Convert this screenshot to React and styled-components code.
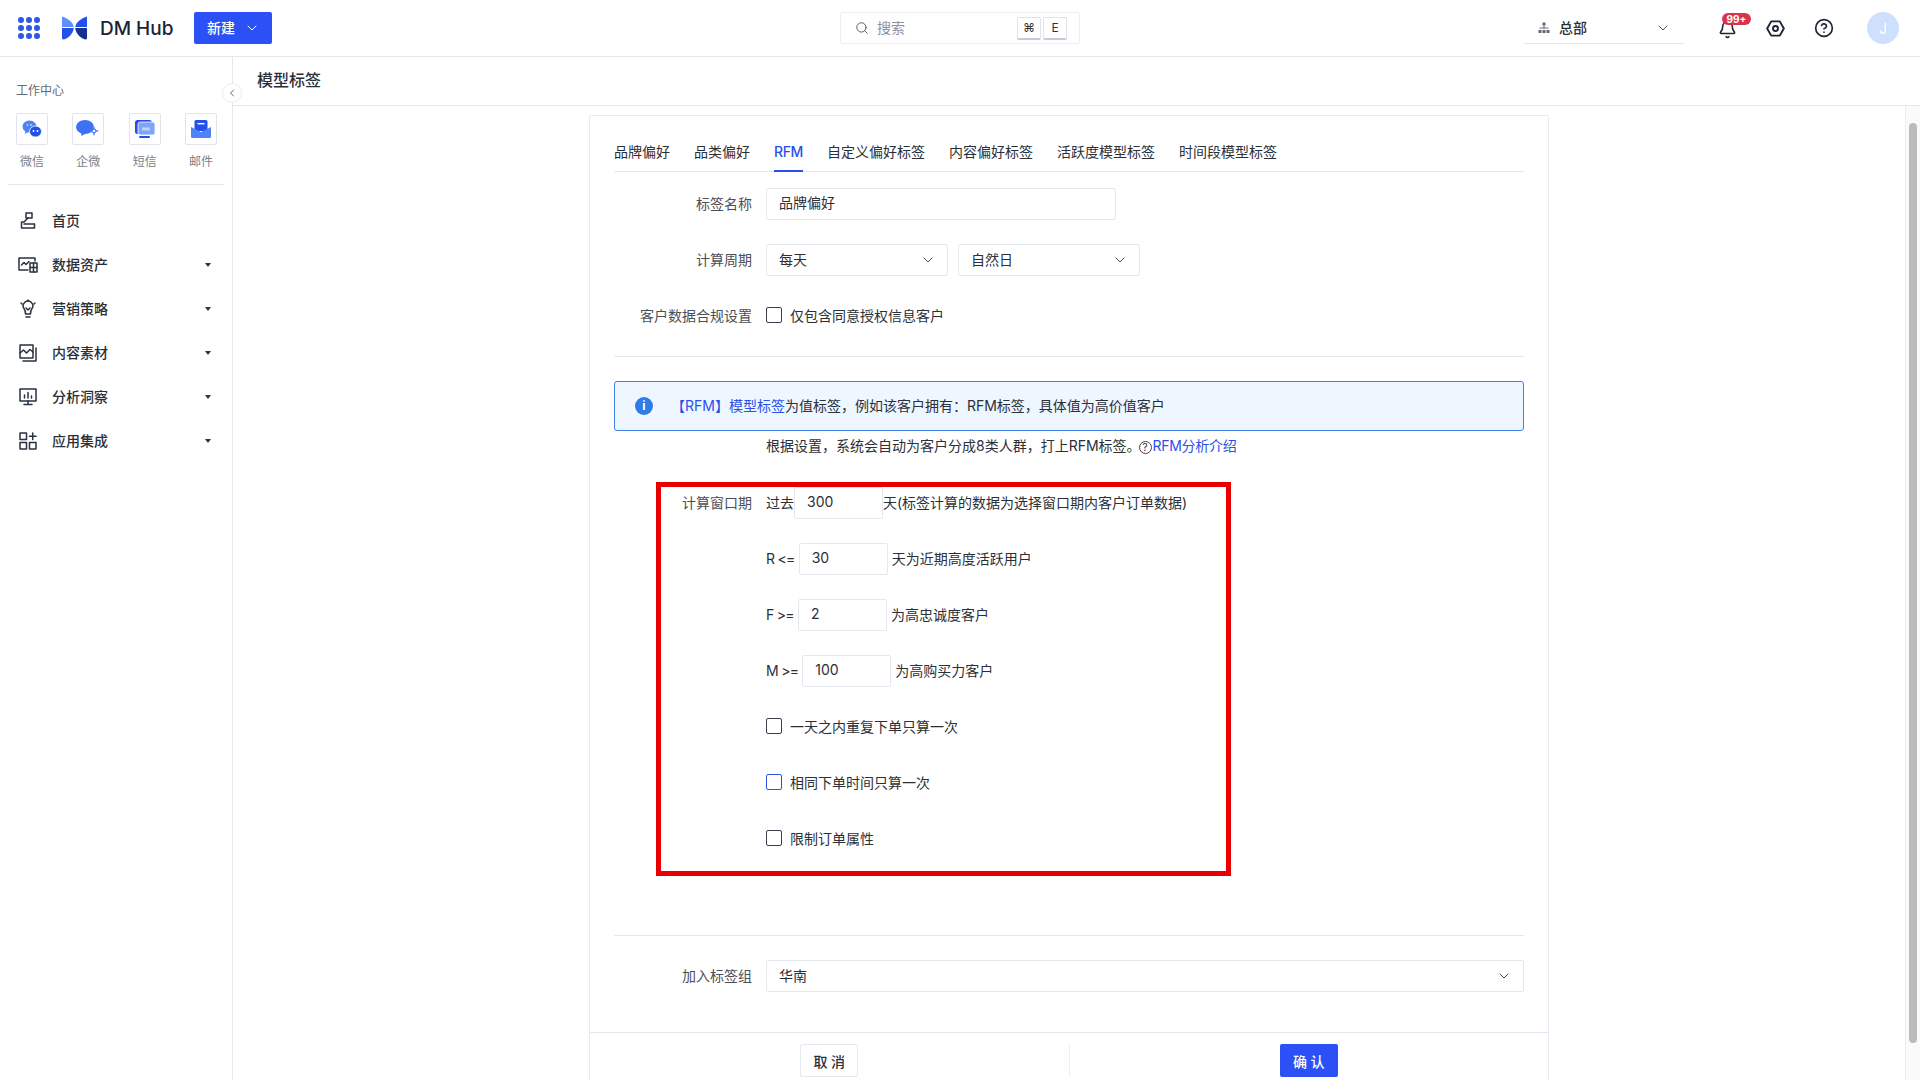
import styled, { createGlobalStyle } from "styled-components";
import { ChevronDown, ChevronLeft, Search, Bell, CircleHelp } from "lucide-react";

const App = () => {
  return (
    <Page>
      <GlobalStyle />
      <TopBar>
        <TopLeft>
          <AppGrid>
            {Array.from({ length: 9 }).map((_, i) => (
              <AppDot key={i} />
            ))}
          </AppGrid>
          <LogoMark />
          <Brand>DM Hub</Brand>
          <NewButton>
            <span>新建</span>
            <ChevronDown size={16} strokeWidth={1.5} />
          </NewButton>
        </TopLeft>
        <SearchBox>
          <Search size={14} strokeWidth={1.6} color="#555" />
          <SearchText>搜索</SearchText>
          <KeyCap>⌘</KeyCap>
          <KeyCap>E</KeyCap>
        </SearchBox>
        <TopRight>
          <OrgSelect>
            <OrgIcon />
            <OrgName>总部</OrgName>
            <ChevronDown size={16} strokeWidth={1.5} color="#555" />
          </OrgSelect>
          <BellWrap>
            <Bell size={19} strokeWidth={2} color="#1d2433" />
            <Badge>99+</Badge>
          </BellWrap>
          <SettingIcon />
          <HelpWrap>
            <CircleHelp size={20} strokeWidth={2} color="#1d2433" />
          </HelpWrap>
          <Avatar>J</Avatar>
        </TopRight>
      </TopBar>
      <Main>
        <Sidebar>
          <CollapseBtn>
            <ChevronLeft size={12} strokeWidth={2} color="#667" />
          </CollapseBtn>
          <SideTitle>工作中心</SideTitle>
          <ChannelRow>
            {channels.map((c) => (
              <Channel key={c.label}>
                <ChannelTile>{c.icon}</ChannelTile>
                <ChannelLabel>{c.label}</ChannelLabel>
              </Channel>
            ))}
          </ChannelRow>
          <SideDivider />
          <Menu>
            {menus.map((m) => (
              <MenuItem key={m.label}>
                <MenuIcon>{m.icon}</MenuIcon>
                <MenuLabel>{m.label}</MenuLabel>
                {m.caret && <Caret />}
              </MenuItem>
            ))}
          </Menu>
        </Sidebar>
        <Content>
          <TitleBar>模型标签</TitleBar>
          <Body>
            <Scroller>
              <Card>
                <Tabs>
                  {tabs.map((t) => (
                    <Tab key={t} $active={t === "RFM"}>
                      {t}
                    </Tab>
                  ))}
                </Tabs>
                <Form>
                  <Row>
                    <Label>标签名称</Label>
                    <Input $width={350}>品牌偏好</Input>
                  </Row>
                  <Row>
                    <Label>计算周期</Label>
                    <Select $width={182}>
                      每天
                      <ChevronDown size={16} strokeWidth={1.4} color="#444" />
                    </Select>
                    <Select $width={182}>
                      自然日
                      <ChevronDown size={16} strokeWidth={1.4} color="#444" />
                    </Select>
                  </Row>
                  <Row>
                    <Label>客户数据合规设置</Label>
                    <CheckLabel>
                      <CheckBox />
                      仅包含同意授权信息客户
                    </CheckLabel>
                  </Row>
                  <Divider />
                  <InfoBox>
                    <InfoIcon>i</InfoIcon>
                    <InfoText>
                      <Link>【RFM】模型标签</Link>为值标签，例如该客户拥有：RFM标签，具体值为高价值客户
                    </InfoText>
                  </InfoBox>
                  <Hint>
                    根据设置，系统会自动为客户分成8类人群，打上RFM标签。
                    <HintMark>?</HintMark>
                    <HintLink>RFM分析介绍</HintLink>
                  </Hint>
                  <Row>
                    <Label>计算窗口期</Label>
                    <Inline>过去</Inline>
                    <Input $width={89}>300</Input>
                    <Inline>天(标签计算的数据为选择窗口期内客户订单数据)</Inline>
                  </Row>
                  <Row>
                    <Label />
                    <Inline $tight>R &lt;=</Inline>
                    <Input $width={89} $gap={4}>30</Input>
                    <Inline $gap={4}>天为近期高度活跃用户</Inline>
                  </Row>
                  <Row>
                    <Label />
                    <Inline $tight>F &gt;=</Inline>
                    <Input $width={89} $gap={4}>2</Input>
                    <Inline $gap={4}>为高忠诚度客户</Inline>
                  </Row>
                  <Row>
                    <Label />
                    <Inline $tight>M &gt;=</Inline>
                    <Input $width={89} $gap={4}>100</Input>
                    <Inline $gap={4}>为高购买力客户</Inline>
                  </Row>
                  <Row>
                    <Label />
                    <CheckLabel>
                      <CheckBox />
                      一天之内重复下单只算一次
                    </CheckLabel>
                  </Row>
                  <Row>
                    <Label />
                    <CheckLabel>
                      <CheckBox $focus />
                      相同下单时间只算一次
                    </CheckLabel>
                  </Row>
                  <Row>
                    <Label />
                    <CheckLabel>
                      <CheckBox />
                      限制订单属性
                    </CheckLabel>
                  </Row>
                  <GroupDivider />
                  <GroupRow>
                    <Label>加入标签组</Label>
                    <Select $grow>
                      华南
                      <ChevronDown size={16} strokeWidth={1.4} color="#444" />
                    </Select>
                  </GroupRow>
                </Form>
                <Footer>
                  <FooterCell>
                    <CancelBtn>取 消</CancelBtn>
                  </FooterCell>
                  <FooterCell $line>
                    <ConfirmBtn>确 认</ConfirmBtn>
                  </FooterCell>
                </Footer>
                <RedFrame />
              </Card>
            </Scroller>
            <ScrollTrack>
              <ScrollThumb />
            </ScrollTrack>
          </Body>
        </Content>
      </Main>
    </Page>
  );
};

export default App;

const LogoMark = () => (
  <LogoSvg viewBox="0 0 25 24">
    <path d="M0 0.5 C6 2.5 11 6 11.8 11 L0 11 Z" fill="#5f8ff7" />
    <path d="M0 12 L11.8 12 C11 18 6 22.5 1.5 23.5 Q0 23.5 0 22 Z" fill="#2450ea" />
    <path d="M25 0.5 C19 2.5 14 6 13.2 11 L25 11 Z" fill="#2450ea" />
    <path d="M25 12 L13.2 12 C14 18 19 22.5 23.5 23.5 Q25 23.5 25 22 Z" fill="#14318f" />
  </LogoSvg>
);

const OrgIcon = () => (
  <svg width="12" height="12" viewBox="0 0 12 12" fill="#667">
    <rect x="4.5" y="0.5" width="3" height="3" />
    <rect x="5.5" y="3.5" width="1" height="3" />
    <rect x="1.5" y="5.5" width="9" height="1" />
    <rect x="0.5" y="8" width="3" height="3" />
    <rect x="4.5" y="8" width="3" height="3" />
    <rect x="8.5" y="8" width="3" height="3" />
  </svg>
);

const SettingIcon = () => (
  <SettingSvg viewBox="0 0 20 20" fill="none" stroke="#1d2433" strokeWidth="2">
    <path d="M5.5 2.5 H14.5 L18.8 10 L14.5 17.5 H5.5 L1.2 10 Z" strokeLinejoin="round" />
    <circle cx="10" cy="10" r="2.6" />
  </SettingSvg>
);

const channels = [
  {
    label: "微信",
    icon: (
      <svg width="20" height="20" viewBox="0 0 20 20">
        <ellipse cx="7.5" cy="7.5" rx="7" ry="6" fill="#4f82f5" />
        <path d="M3.5 11 L3 15 L7 12.5 Z" fill="#4f82f5" />
        <ellipse cx="13.5" cy="12.5" rx="6" ry="5.5" fill="#2450ea" stroke="#fff" strokeWidth="0.8" />
        <circle cx="11.5" cy="12" r="0.9" fill="#fff" />
        <circle cx="15.5" cy="12" r="0.9" fill="#fff" />
        <circle cx="5.5" cy="6" r="0.8" fill="#fff" />
        <circle cx="9" cy="6" r="0.8" fill="#fff" />
      </svg>
    ),
  },
  {
    label: "企微",
    icon: (
      <svg width="26" height="20" viewBox="0 0 26 20">
        <ellipse cx="10" cy="8" rx="9" ry="7" fill="#3f72f2" />
        <path d="M6 13 L6.5 17 L11 14.5 Z" fill="#3f72f2" />
        <path d="M19 9.5 L21.5 12 L19 14.5 L16.5 12 Z" fill="#fff" stroke="#3f72f2" strokeWidth="1.2" />
        <circle cx="19" cy="8.5" r="1" fill="#7da2f7" />
        <circle cx="22.5" cy="12" r="1" fill="#7da2f7" />
        <circle cx="19" cy="15.5" r="1" fill="#7da2f7" />
      </svg>
    ),
  },
  {
    label: "短信",
    icon: (
      <svg width="20" height="20" viewBox="0 0 20 20">
        <rect x="0" y="1" width="17" height="14" rx="2.5" fill="#2450ea" />
        <rect x="3" y="3" width="17" height="13" rx="2.5" fill="#7fa4f8" stroke="#fff" strokeWidth="0.8" />
        <rect x="7" y="8.5" width="8" height="3" fill="#fff" opacity="0.5" />
        <rect x="4" y="17" width="11" height="2" rx="1" fill="#2450ea" />
      </svg>
    ),
  },
  {
    label: "邮件",
    icon: (
      <svg width="20" height="18" viewBox="0 0 20 18">
        <rect x="3.5" y="0" width="13" height="11" rx="1.5" fill="#2450ea" />
        <rect x="6.5" y="3" width="7" height="1.4" fill="#fff" />
        <path d="M0 7 L10 12 L20 7 V16.5 Q20 18 18.5 18 H1.5 Q0 18 0 16.5 Z" fill="#4f82f5" />
      </svg>
    ),
  },
];

const lineProps = {
  fill: "none",
  stroke: "#2a3142",
  strokeWidth: 1.5,
  strokeLinejoin: "round",
  strokeLinecap: "round",
};

const menus = [
  {
    label: "首页",
    icon: (
      <svg width="16" height="18" viewBox="0 0 16 18" {...lineProps}>
        <rect x="6" y="1" width="6" height="5" />
        <path d="M8 6 L4 10 H1.5 V16 H14.5 V12 H4" />
      </svg>
    ),
  },
  {
    label: "数据资产",
    caret: true,
    icon: (
      <svg width="20" height="16" viewBox="0 0 20 16" {...lineProps}>
        <path d="M10 13 H1 V1 H17 V4" />
        <path d="M3.5 8 L6 5.5 L8 7.5 L11 4.5" />
        <rect x="12" y="6" width="7" height="9" />
        <path d="M12 10.5 H19 M15.5 6 V15" />
      </svg>
    ),
  },
  {
    label: "营销策略",
    caret: true,
    icon: (
      <svg width="18" height="20" viewBox="0 0 18 20" {...lineProps}>
        <path d="M5 8.5 a4.8 4.8 0 1 1 8 0 Q11.5 10.5 11.5 14 H6.5 Q6.5 10.5 5 8.5 Z" transform="translate(0 1)" />
        <path d="M7 18 H11" />
        <path d="M9 1 V2 M2 4 L3 5 M16 4 L15 5" />
        <path d="M7 9 L9 11 L11 9" />
      </svg>
    ),
  },
  {
    label: "内容素材",
    caret: true,
    icon: (
      <svg width="18" height="18" viewBox="0 0 18 18" {...lineProps}>
        <rect x="1" y="1" width="13" height="13" />
        <path d="M4 17 H17 V4" />
        <path d="M1 9 L4.5 6 L7.5 9 L11 5.5 L14 8" />
      </svg>
    ),
  },
  {
    label: "分析洞察",
    caret: true,
    icon: (
      <svg width="18" height="18" viewBox="0 0 18 18" {...lineProps}>
        <rect x="1" y="1" width="16" height="12" />
        <path d="M5.5 10 V7 M9 10 V4.5 M12.5 10 V8" />
        <path d="M9 13 V16 M5 16.5 H13" />
      </svg>
    ),
  },
  {
    label: "应用集成",
    caret: true,
    icon: (
      <svg width="18" height="18" viewBox="0 0 18 18" {...lineProps}>
        <rect x="1" y="1" width="6.5" height="6.5" />
        <rect x="1" y="10.5" width="6.5" height="6.5" />
        <rect x="10.5" y="10.5" width="6.5" height="6.5" />
        <path d="M13.7 1 V7.5 M10.5 4.2 H17" />
      </svg>
    ),
  },
];

const tabs = ["品牌偏好", "品类偏好", "RFM", "自定义偏好标签", "内容偏好标签", "活跃度模型标签", "时间段模型标签"];

const GlobalStyle = createGlobalStyle`
  html, body {
    margin: 0;
    padding: 0;
    background: #fff;
    overflow: hidden;
  }
  * {
    box-sizing: border-box;
  }
  body {
    font-family: Inter, "Noto Sans CJK SC", "Noto Sans", sans-serif;
    font-size: 14px;
    color: #2b2f38;
  }
`;

const Page = styled.div`
  width: 1920px;
  height: 1080px;
  display: flex;
  flex-direction: column;
  overflow: hidden;
  background: #fff;
`;

const TopBar = styled.header`
  height: 57px;
  flex: none;
  border-bottom: 1px solid #e6e8ef;
  display: grid;
  grid-template-columns: 840px 240px 1fr;
  align-items: center;
`;

const TopLeft = styled.div`
  display: flex;
  align-items: center;
  padding-left: 18px;
`;

const AppGrid = styled.div`
  display: grid;
  grid-template-columns: repeat(3, 6px);
  gap: 2px;
  width: 22px;
`;

const AppDot = styled.span`
  width: 6px;
  height: 6px;
  border-radius: 50%;
  background: #2d55e8;
`;

const LogoSvg = styled.svg`
  width: 25px;
  height: 24px;
  margin-left: 22px;
`;

const Brand = styled.span`
  margin-left: 13px;
  font-size: 19px;
  font-weight: 500;
  color: #1b2436;
  width: 94px;
`;

const NewButton = styled.button`
  width: 78px;
  height: 32px;
  border: none;
  border-radius: 2px;
  background: #2b50f5;
  color: #fff;
  font: inherit;
  font-weight: 500;
  display: flex;
  align-items: center;
  gap: 9px;
  padding: 0 0 0 13px;

  span {
    padding-bottom: 2px;
  }
`;

const SearchBox = styled.div`
  height: 32px;
  border: 1px solid #eceef3;
  border-radius: 2px;
  display: flex;
  align-items: center;
  padding: 0 12px 0 14px;
  gap: 2px;
`;

const SearchText = styled.span`
  color: #8a90a0;
  margin-left: 6px;
  padding-bottom: 2px;
  flex: 1;
`;

const KeyCap = styled.span`
  width: 24px;
  height: 23px;
  border: 1px solid #dfe2ea;
  border-bottom: 2px solid #c6cad6;
  border-radius: 2px;
  font-size: 12px;
  color: #333;
  display: flex;
  align-items: center;
  justify-content: center;
`;

const TopRight = styled.div`
  display: flex;
  align-items: center;
  height: 100%;
  padding-left: 444px;
`;

const OrgSelect = styled.div`
  width: 160px;
  height: 32px;
  flex: none;
  border-bottom: 1px solid #e6e8ef;
  display: flex;
  align-items: center;
  padding: 0 13px 0 14px;
`;

const OrgName = styled.span`
  flex: 1;
  margin-left: 9px;
  padding-bottom: 2px;
  font-weight: 500;
`;

const BellWrap = styled.div`
  position: relative;
  width: 20px;
  height: 20px;
  margin-left: 34px;
  margin-top: 4px;
  flex: none;
`;

const Badge = styled.span`
  position: absolute;
  top: -7px;
  left: 4px;
  width: 29px;
  height: 12px;
  border-radius: 6px;
  background: #d9344a;
  color: #fff;
  font-size: 10px;
  line-height: 12px;
  font-weight: 700;
  text-align: center;
`;

const SettingSvg = styled.svg`
  width: 19px;
  height: 19px;
  margin-left: 28px;
  flex: none;
`;

const HelpWrap = styled.div`
  display: flex;
  margin-left: 29px;
`;

const Avatar = styled.div`
  width: 32px;
  height: 32px;
  margin-left: 33px;
  border-radius: 50%;
  background: #cfe0ff;
  color: #fff;
  display: flex;
  align-items: center;
  justify-content: center;
  flex: none;
`;

const Main = styled.div`
  flex: 1;
  display: flex;
  min-height: 0;
`;

const Sidebar = styled.aside`
  position: relative;
  width: 233px;
  flex: none;
  border-right: 1px solid #e6e8ef;
  padding: 26px 8px 0;
`;

const CollapseBtn = styled.div`
  position: absolute;
  top: 26px;
  right: -10px;
  width: 20px;
  height: 20px;
  border-radius: 50%;
  background: #fff;
  border: 1px solid #eceef3;
  display: flex;
  align-items: center;
  justify-content: center;
  z-index: 2;
`;

const SideTitle = styled.div`
  font-size: 12px;
  line-height: 16px;
  color: #666b78;
  padding-left: 8px;
`;

const ChannelRow = styled.div`
  display: grid;
  grid-template-columns: repeat(4, 32px);
  justify-content: space-between;
  padding: 0 7px 0 8px;
  margin-top: 14px;
`;

const Channel = styled.div`
  display: flex;
  flex-direction: column;
  align-items: center;
`;

const ChannelTile = styled.div`
  width: 32px;
  height: 32px;
  border: 1px solid #e3e5ec;
  border-radius: 2px;
  display: flex;
  align-items: center;
  justify-content: center;
`;

const ChannelLabel = styled.span`
  margin-top: 8px;
  font-size: 12px;
  line-height: 18px;
  color: #7a7f8c;
`;

const SideDivider = styled.div`
  height: 1px;
  background: #e6e8ef;
  margin-top: 13px;
`;

const Menu = styled.nav`
  margin-top: 14px;
`;

const MenuItem = styled.div`
  height: 44px;
  display: flex;
  align-items: center;
  padding-right: 13px;
`;

const MenuIcon = styled.span`
  width: 24px;
  margin-left: 8px;
  display: flex;
  justify-content: center;
`;

const MenuLabel = styled.span`
  flex: 1;
  margin-left: 12px;
  padding-bottom: 2px;
  color: #2b2f38;
  font-weight: 500;
`;

const Caret = styled.span`
  width: 0;
  height: 0;
  border-left: 3.5px solid transparent;
  border-right: 3.5px solid transparent;
  border-top: 4px solid #2a3142;
`;

const Content = styled.main`
  flex: 1;
  min-width: 0;
  display: flex;
  flex-direction: column;
`;

const TitleBar = styled.div`
  height: 49px;
  flex: none;
  padding-left: 24px;
  border-bottom: 1px solid #e6e8ef;
  font-size: 16px;
  font-weight: 500;
  line-height: 46px;
  color: #2b2f38;
`;

const Body = styled.div`
  flex: 1;
  min-height: 0;
  display: flex;
`;

const Scroller = styled.div`
  flex: 1;
  min-width: 0;
  padding-top: 9px;
  overflow: hidden;
`;

const Card = styled.section`
  position: relative;
  width: 960px;
  height: 1100px;
  margin: 0 auto;
  border: 1px solid #e9ebf0;
  border-bottom: none;
  border-radius: 2px 2px 0 0;
`;

const Tabs = styled.div`
  height: 56px;
  margin: 0 24px;
  border-bottom: 1px solid #e6e8ef;
  display: flex;
  gap: 24px;
`;

const Tab = styled.div`
  height: 56px;
  padding-top: 26px;
  line-height: 20px;
  color: ${(p) => (p.$active ? "#2b50e8" : "#2b2f38")};
  font-weight: ${(p) => (p.$active ? 500 : 400)};
  letter-spacing: ${(p) => (p.$active ? "-0.4px" : "0")};
  border-bottom: ${(p) => (p.$active ? "2px solid #2b50e8" : "none")};
`;

const Form = styled.div`
  padding: 16px 24px 0;
`;

const Row = styled.div`
  display: flex;
  align-items: center;
  height: 32px;
  margin-bottom: 24px;
`;

const GroupRow = styled(Row)`
  margin-bottom: 40px;
`;

const Label = styled.label`
  width: 138px;
  flex: none;
  margin-right: 14px;
  padding-bottom: 2px;
  text-align: right;
  color: #4a4f5a;
`;

const Input = styled.div`
  width: ${(p) => p.$width}px;
  height: 32px;
  flex: none;
  margin-left: ${(p) => p.$gap || 0}px;
  border: 1px solid #e6e8ef;
  border-radius: 2px;
  padding: 0 12px;
  line-height: 28px;
  color: #2b2f38;
`;

const Select = styled.div`
  width: ${(p) => (p.$width ? `${p.$width}px` : "auto")};
  flex: ${(p) => (p.$grow ? 1 : "none")};
  height: 32px;
  margin-right: ${(p) => (p.$grow ? 0 : 10)}px;
  border: 1px solid #e6e8ef;
  border-radius: 2px;
  padding: 0 11px 3px 12px;
  display: flex;
  align-items: center;
  justify-content: space-between;
  color: #2b2f38;

  svg {
    margin-top: 3px;
  }
`;

const Inline = styled.span`
  margin-left: ${(p) => p.$gap || 0}px;
  padding-bottom: 2px;
  letter-spacing: ${(p) => (p.$tight ? "-0.7px" : "0")};
  color: #2b2f38;
  white-space: nowrap;
`;

const CheckLabel = styled.label`
  display: flex;
  align-items: center;
  gap: 8px;
  padding-bottom: 2px;
  color: #2b2f38;
`;

const CheckBox = styled.span`
  width: 16px;
  height: 16px;
  flex: none;
  border: 1px solid ${(p) => (p.$focus ? "#2b50e8" : "#3a3f4b")};
  border-radius: 2px;
`;

const Divider = styled.div`
  height: 1px;
  background: #e6e8ef;
  margin-bottom: 24px;
`;

const InfoBox = styled.div`
  height: 50px;
  display: flex;
  align-items: center;
  padding-left: 20px;
  border: 1px solid #3f7fe8;
  border-radius: 3px;
  background: #eef6ff;
`;

const InfoIcon = styled.span`
  width: 18px;
  height: 18px;
  border-radius: 50%;
  background: #2f7be8;
  color: #fff;
  font-size: 12px;
  font-weight: 700;
  line-height: 18px;
  text-align: center;
  margin-right: 18px;
`;

const InfoText = styled.span`
  padding-bottom: 2px;
  color: #2b2f38;
`;

const Link = styled.a`
  color: #2b50e8;
`;

const HintLink = styled(Link)`
  letter-spacing: -0.3px;
`;

const Hint = styled.div`
  height: 56px;
  padding: 4px 0 0 152px;
  line-height: 22px;
  color: #2b2f38;
`;

const HintMark = styled.span`
  display: inline-block;
  width: 13px;
  height: 13px;
  margin: 0 1px 0 -2px;
  border: 1px solid #444;
  border-radius: 50%;
  font-size: 10px;
  line-height: 11px;
  text-align: center;
  vertical-align: 0;
`;

const GroupDivider = styled.div`
  height: 1px;
  background: #e6e8ef;
  margin: 80px 0 24px;
`;

const Footer = styled.div`
  border-top: 1px solid #e6e8ef;
  padding-top: 11px;
  display: flex;
`;

const FooterCell = styled.div`
  flex: 1;
  height: 33px;
  display: flex;
  justify-content: center;
  border-left: ${(p) => (p.$line ? "1px solid #eef0f4" : "none")};
`;

const CancelBtn = styled.button`
  width: 58px;
  height: 33px;
  border: 1px solid #e6e8ef;
  border-radius: 2px;
  background: #fff;
  color: #2b2f38;
  font: inherit;
  font-weight: 500;
`;

const ConfirmBtn = styled.button`
  width: 58px;
  height: 33px;
  border: none;
  border-radius: 2px;
  background: #2b50f5;
  color: #fff;
  font: inherit;
  font-weight: 500;
`;

const RedFrame = styled.div`
  position: absolute;
  left: 66px;
  top: 366px;
  width: 575px;
  height: 394px;
  border: 5px solid #e60000;
  pointer-events: none;
`;

const ScrollTrack = styled.div`
  width: 15px;
  flex: none;
  border-left: 1px solid #eceef2;
  background: #fafafa;
`;

const ScrollThumb = styled.div`
  width: 8px;
  height: 920px;
  margin: 17px 0 0 3px;
  border-radius: 4px;
  background: #bbbbbb;
`;
